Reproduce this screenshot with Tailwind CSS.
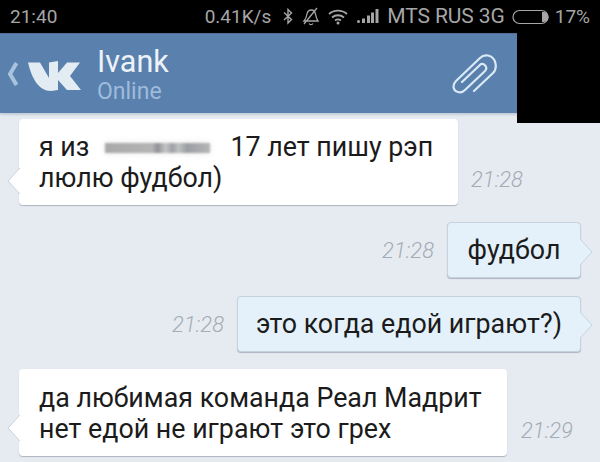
<!DOCTYPE html>
<html lang="en">
<head>
  <meta charset="UTF-8" />
  <title>Ivank</title>
  <script src="https://cdn.jsdelivr.net/npm/@tailwindcss/browser@4"></script>
</head>
<body class="relative w-[600px] h-[462px] overflow-hidden bg-[#e6ebf1] font-['Roboto',sans-serif] text-[#1b1b1b]">

  <!-- Status bar -->
  <div class="h-[33px] bg-black flex items-center pl-[10px] pr-[10px] text-[#a6a6a6] text-[19px] leading-none">
    <span>21:40</span>
    <div class="ml-auto flex items-center">
      <span>0.41K/s</span>
      <svg class="ml-[12px]" width="10" height="17" viewBox="0 0 10 17" fill="none" stroke="#a6a6a6" stroke-width="1.4"><path d="M1 4.500 8.500 11.500 5 15V1.500L8.500 5 1 12"/></svg>
      <svg class="ml-[9px]" width="18" height="19" viewBox="0 0 18 19" fill="none" stroke="#a6a6a6" stroke-width="1.3"><path d="M2 14c2-2 2.500-4 3-7C5.500 4 7.500 3 9.500 3s3.500 2 4 4c.5 3 1 5 2.500 7zM7 16.500c1 1.500 3 1.500 4 0M2 17 15 1"/></svg>
      <svg class="ml-[8px]" width="20" height="16" viewBox="0 0 20 16" fill="none" stroke="#a6a6a6" stroke-width="1.800"><path d="M1 5c5-4.500 13-4.500 18 0M4 8.500c3.500-3 8.500-3 12 0M7 11.500c2-1.500 4-1.500 6 0"/><circle cx="10" cy="14" r="1.500" fill="#a6a6a6" stroke="none"/></svg>
      <svg class="ml-[9px]" width="22" height="15" viewBox="0 0 22 15" fill="#a6a6a6"><rect x="0" y="11" width="3" height="3" rx="1.500"/><rect x="5" y="9.500" width="3" height="4.500"/><rect x="10" y="6.500" width="3" height="7.500"/><rect x="14" y="3.500" width="3" height="10.500"/><rect x="18.500" y="0" width="3" height="14"/></svg>
      <span class="ml-[8px] text-[21px] tracking-[-0.1px]">MTS RUS 3G</span>
      <svg class="ml-[7px]" width="38" height="16" viewBox="0 0 38 16" fill="none"><rect x="1" y="1.500" width="35" height="13" rx="6.500" stroke="#a6a6a6" stroke-width="1.200"/><path d="M30 3h1.500a5 5 0 0 1 0 10H30z" fill="#a6a6a6"/></svg>
      <span class="ml-[5px]">17%</span>
    </div>
  </div>

  <!-- Header -->
  <div class="h-[80px] bg-[#5a80ad] border-t border-[#4f6f98] flex items-center pl-[7px] shadow-[0_2px_2px_#c4ccd6]">
    <svg width="11" height="24" viewBox="0 0 11 24" fill="none" stroke="#a9c3dd" stroke-width="4"><path d="M9.500 1 3 12l6.500 11"/></svg>
    <svg class="ml-[9px] mt-[5px]" width="54" height="31" viewBox="0 0 54 31" fill="#e3ebf3"><path d="M1 1.500H13L22 17V1.500L31 0V12L40 1.500H53L43 15 54 29H40L31 19V29L24 30C12 30 5 18 1 1.500Z"/></svg>
    <div class="ml-[16px] mt-[3px] flex flex-col">
      <span class="text-[30.500px] leading-[33px] text-[#edf2f7]">Ivank</span>
      <span class="text-[23px] leading-[27px] text-[#9dbcdc]">Online</span>
    </div>
    <svg class="ml-[283px]" width="45" height="40" viewBox="0 0 45 40" fill="none" stroke="#d9e9f5" stroke-width="2.200" stroke-linecap="round"><path d="M22 37 41 19C46 14 44 3 36 1.500 33 1 30 2 28 4L4 27C0 31 1 37 6 38 9 39 11 38 13 36L33 17C36 14 33 9 29 10L10 28"/></svg>
  </div>

  <!-- Messages -->
  <main class="flex flex-col gap-[17px] pt-[6px] pl-[19px] pr-[19px]">
    <div class="flex items-end">
      <div class="relative w-[439px] h-[86px] bg-white rounded-[4px] shadow-[0_1px_1px_#aab4c0] pl-[20px] pt-[13px] text-[26.800px] leading-[31px]">
        <svg class="absolute left-[-12px] top-[49px]" width="13" height="26" viewBox="0 0 13 26" fill="#fff" stroke="#c9d2dc"><path d="M13 0 1 13l12 13"/></svg>
        <div class="flex items-center">
          <span>я из</span>
          <div class="ml-[16px] w-[105px] h-[10px] blur-[1px] shadow-[0_0_6px_#e6e6e6] bg-[linear-gradient(90deg,#a9a9a9_0%,#b4b4b4_45%,#8f9298_50%,#c6c6c6_58%,#9a9ea4_64%,#c2c2c2_70%,#9a9ea4_78%,#b6b6b6_100%)]"></div>
          <span class="ml-[20px]">17 лет пишу рэп</span>
        </div>
        <div>люлю фудбол)</div>
      </div>
      <span class="ml-[13px] mb-[9px] text-[22px] italic font-light text-[#a3abb6]">21:28</span>
    </div>

    <div class="flex items-center justify-end">
      <span class="mr-[13px] text-[22px] italic font-light text-[#a3abb6]">21:28</span>
      <div class="relative w-[134px] h-[56px] bg-[#e4f1fa] border border-[#c5d3df] rounded-[4px] shadow-[0_1px_1px_#aab4c0] flex items-center justify-center text-[26.800px]">
        <svg class="absolute right-[-13px] top-[16px]" width="13" height="26" viewBox="0 0 13 26" fill="#e4f1fa" stroke="#c5d3df"><path d="M0 0 12 13 0 26"/></svg>
        <span>фудбол</span>
      </div>
    </div>

    <div class="flex items-center justify-end mt-px">
      <span class="mr-[13px] text-[22px] italic font-light text-[#a3abb6]">21:28</span>
      <div class="relative w-[344px] h-[56px] bg-[#e4f1fa] border border-[#c5d3df] rounded-[4px] shadow-[0_1px_1px_#aab4c0] flex items-center justify-center text-[26.800px]">
        <svg class="absolute right-[-13px] top-[15px]" width="13" height="26" viewBox="0 0 13 26" fill="#e4f1fa" stroke="#c5d3df"><path d="M0 0 12 13 0 26"/></svg>
        <span>это когда едой играют?)</span>
      </div>
    </div>

    <div class="flex items-end">
      <div class="relative w-[488px] h-[87px] bg-white rounded-[4px] shadow-[0_1px_1px_#aab4c0] pl-[20px] pt-[14px] text-[26.800px] leading-[31px]">
        <svg class="absolute left-[-12px] top-[46px]" width="13" height="26" viewBox="0 0 13 26" fill="#fff" stroke="#c9d2dc"><path d="M13 0 1 13l12 13"/></svg>
        <div>да любимая команда Реал Мадрит</div>
        <div>нет едой не играют это грех</div>
      </div>
      <span class="ml-[14px] mb-[9px] text-[22px] italic font-light text-[#a3abb6]">21:29</span>
    </div>
  </main>

  <!-- Black censor block over the header corner -->
  <div class="absolute left-[517px] top-[33px] w-[83px] h-[90px] bg-black"></div>
</body>
</html>
